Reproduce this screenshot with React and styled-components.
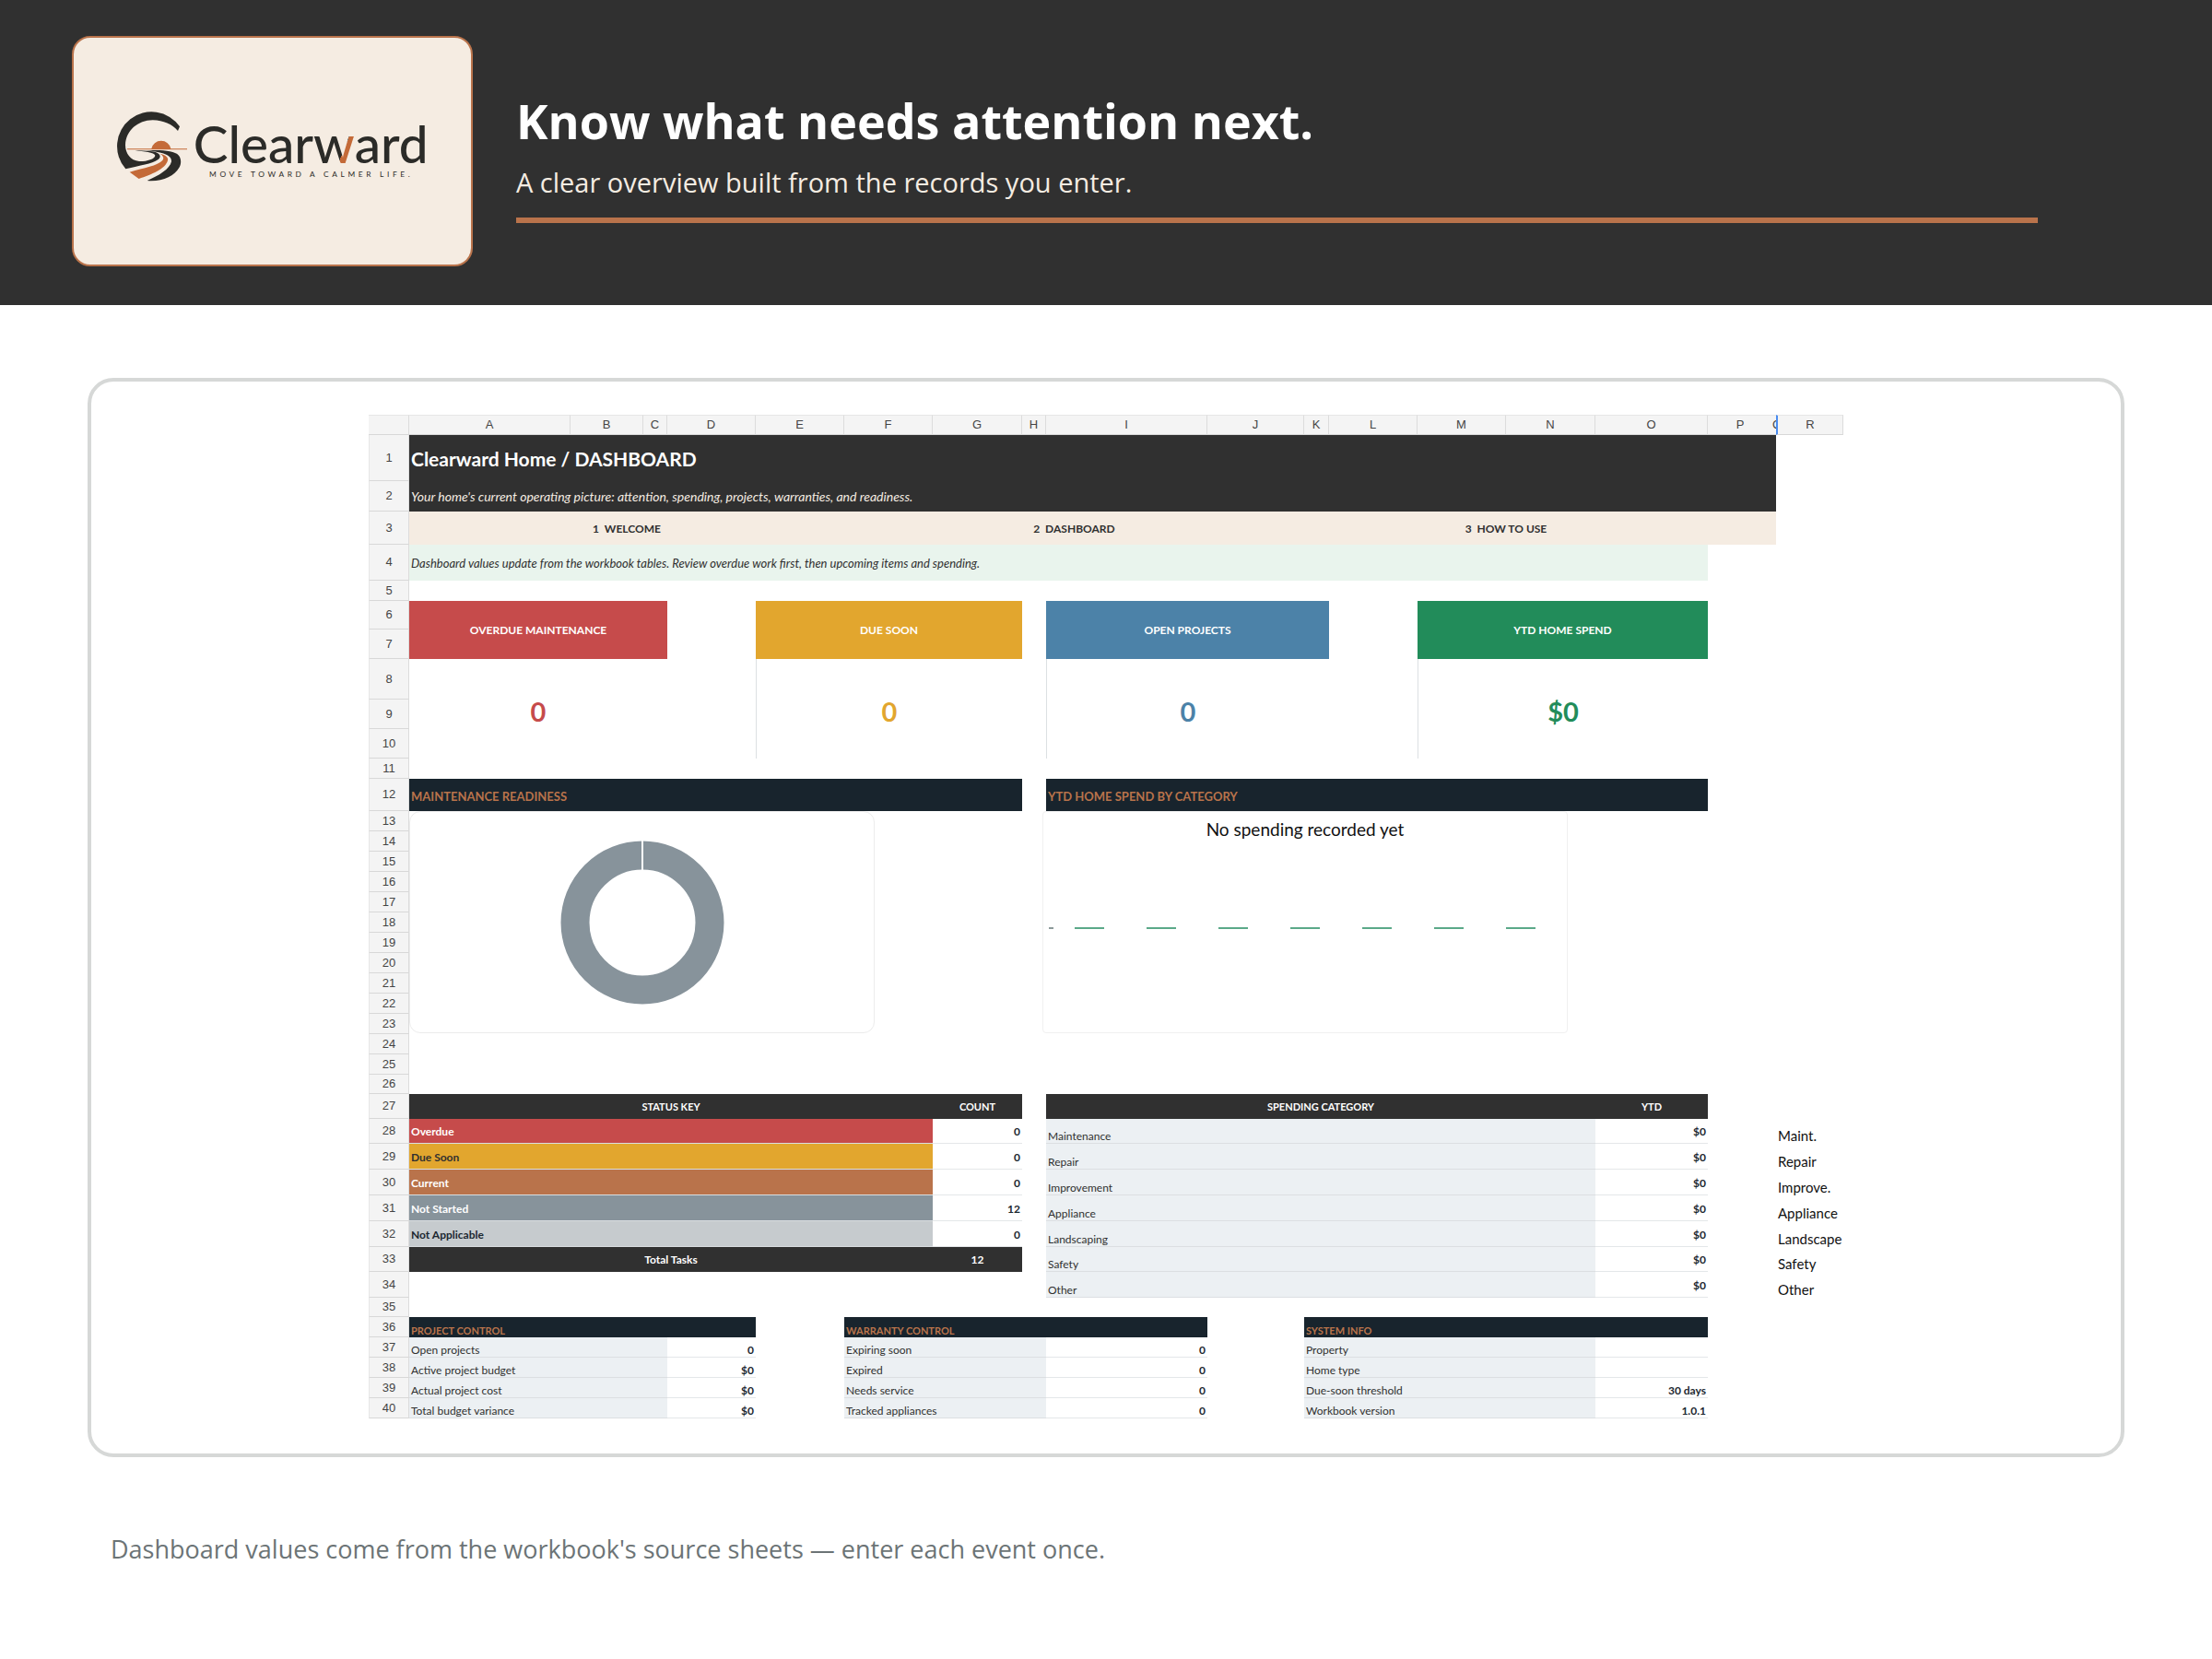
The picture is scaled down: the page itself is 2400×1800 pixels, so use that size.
import React from 'react'
import styled, { createGlobalStyle, css } from 'styled-components'

// column letter -> width, the table shares out its own width in these proportions
const columns = [
  ['A', 175], ['B', 79], ['C', 26], ['D', 96], ['E', 96], ['F', 96], ['G', 97], ['H', 26],
  ['I', 175], ['J', 105], ['K', 27], ['L', 96], ['M', 96], ['N', 97], ['O', 122], ['P', 70],
  ['Q', 4], ['R', 73],
]

const statuses = [
  { name: 'Overdue', count: 0, bg: '#c64b4b', color: '#fff', height: 27 },
  { name: 'Due Soon', count: 0, bg: '#e2a62e', color: '#303030', height: 28 },
  { name: 'Current', count: 0, bg: '#b9734b', color: '#fff', height: 28 },
  { name: 'Not Started', count: 12, bg: '#87939b', color: '#fff', height: 28 },
  { name: 'Not Applicable', count: 0, bg: '#c6cbce', color: '#1b2730', height: 28 },
]

const categories = [
  ['Maintenance', 'Maint.'],
  ['Repair', 'Repair'],
  ['Improvement', 'Improve.'],
  ['Appliance', 'Appliance'],
  ['Landscaping', 'Landscape'],
  ['Safety', 'Safety'],
  ['Other', 'Other'],
]

const controls = [
  [['Open projects', '0'], ['Expiring soon', '0'], ['Property', '']],
  [['Active project budget', '$0'], ['Expired', '0'], ['Home type', '']],
  [['Actual project cost', '$0'], ['Needs service', '0'], ['Due-soon threshold', '30 days']],
  [['Total budget variance', '$0'], ['Tracked appliances', '0'], ['Workbook version', '1.0.1']],
]

const Row = ({ n, h, children }) => (
  <Tr $h={h}>
    <RowHead scope="row">{n}</RowHead>
    {children}
  </Tr>
)

const Spending = ({ i }) => (
  <>
    <LabelCell colSpan={6}>{categories[i][0]}</LabelCell>
    <ValueCell>$0</ValueCell>
    <Cell colSpan={2} />
    <HelperCell>{categories[i][1]}</HelperCell>
  </>
)

const Logo = () => (
  <svg width="340" height="88" viewBox="201 300 1020 264" role="img" aria-label="Clearward">
    <defs>
      {/* splits the w so that only its last stroke is orange */}
      <linearGradient id="stroke" gradientUnits="userSpaceOnUse" x1="925" y1="421" x2="959" y2="435">
        <stop offset="0.5" stopColor="#2b2b28" />
        <stop offset="0.5" stopColor="#c46a38" />
      </linearGradient>
    </defs>
    <path fill="#2b2b28" d="M408 352A112 112 0 1 0 232 490C280 478 316 474 338 459C352 448 340 436 318 433C300 431 280 430 262 430C290 433 326 436 328 446C328 458 298 466 276 465C248 463 231 440 231 412C233 364 272 332 320 331C356 332 382 344 402 366Z" />
    <path fill="#c46a38" d="M343 440C362 444 372 452 369 462C362 490 316 508 275 522L245 500C292 486 336 480 352 462C358 454 354 446 343 440Z" />
    <path fill="#2b2b28" d="M300 430C350 428 390 430 405 446C414 458 413 474 406 486C390 514 350 532 302 528C340 512 376 490 381 466C384 444 346 434 300 430Z" />
    <path fill="#c46a38" d="M316 424a32 31 0 0 1 63 0H432V427H237V424Z" />
    <LogoType x="452" y="472">
      Clear<tspan fill="url(#stroke)">w</tspan>ard
    </LogoType>
    <LogoTag x="504" y="516">MOVE TOWARD A CALMER LIFE.</LogoTag>
  </svg>
)

const Donut = () => (
  <svg width="178" height="178" viewBox="0 0 178 178" role="img" aria-label="Maintenance readiness">
    <circle cx="89" cy="89" r="73" fill="none" stroke="#87939b" strokeWidth="31" />
    <path d="M89 0V32" stroke="#fff" strokeWidth="2" />
  </svg>
)

const SpendBars = () => (
  <svg width="100%" height="120" viewBox="0 0 568 120" role="img" aria-label="Spend by category">
    <path d="M6 43H11" stroke="#8c9a9a" strokeWidth="2" />
    {categories.map(([name], i) => (
      <path key={name} d={`M${34 + i * 78} 43h32`} stroke="#5ba989" strokeWidth="2" />
    ))}
  </svg>
)

const App = () => (
  <>
    <GlobalStyle />
    <Header>
      <LogoCard>
        <Logo />
      </LogoCard>
      <Intro>
        <Headline>Know what needs attention next.</Headline>
        <Lead>A clear overview built from the records you enter.</Lead>
      </Intro>
    </Header>
    <Main>
      <Panel>
        <Sheet>
          <colgroup>
            <Col $w={44} />
            {columns.map(([letter, w]) => <Col key={letter} $w={w} />)}
          </colgroup>
          <thead>
            <Tr $h={22}>
              <ColHead aria-label="Corner" />
              {columns.map(([letter]) => (
                <ColHead key={letter} scope="col" $letter={letter}>
                  {letter === 'Q' ? <Clip>Q</Clip> : letter}
                </ColHead>
              ))}
            </Tr>
          </thead>
          <tbody>
            <Row n={1} h={50}>
              <TitleCell colSpan={17}>Clearward Home / DASHBOARD</TitleCell>
            </Row>
            <Row n={2} h={33}>
              <TaglineCell colSpan={17}>Your home's current operating picture: attention, spending, projects, warranties, and readiness.</TaglineCell>
            </Row>
            <Row n={3} h={36}>
              <NavCell colSpan={5}><NavLink href="#welcome">1&nbsp; WELCOME</NavLink></NavCell>
              <NavCell colSpan={5}><NavLink href="#dashboard">2&nbsp; DASHBOARD</NavLink></NavCell>
              <NavCell colSpan={5}><NavLink href="#how-to-use">3&nbsp; HOW TO USE</NavLink></NavCell>
              <NavCell colSpan={2} />
            </Row>
            <Row n={4} h={39}>
              <NoteCell colSpan={15}>Dashboard values update from the workbook tables. Review overdue work first, then upcoming items and spending.</NoteCell>
            </Row>
            <Row n={5} h={22} />
            <Row n={6} h={31}>
              <KpiHead colSpan={3} rowSpan={2} $bg="#c64b4b">OVERDUE MAINTENANCE</KpiHead>
              <Cell rowSpan={2} />
              <KpiHead colSpan={3} rowSpan={2} $bg="#e2a62e">DUE SOON</KpiHead>
              <Cell rowSpan={2} />
              <KpiHead colSpan={3} rowSpan={2} $bg="#4c82a8">OPEN PROJECTS</KpiHead>
              <Cell rowSpan={2} />
              <KpiHead colSpan={3} rowSpan={2} $bg="#228c5a">YTD HOME SPEND</KpiHead>
            </Row>
            <Row n={7} h={32} />
            <Row n={8} h={44}>
              <KpiValue colSpan={3} rowSpan={3} $color="#c64b4b">0</KpiValue>
              <Cell rowSpan={3} />
              <KpiValue colSpan={3} rowSpan={3} $color="#e2a62e" $line>0</KpiValue>
              <Cell rowSpan={3} />
              <KpiValue colSpan={3} rowSpan={3} $color="#4c82a8" $line>0</KpiValue>
              <Cell rowSpan={3} />
              <KpiValue colSpan={3} rowSpan={3} $color="#228c5a" $line>$0</KpiValue>
            </Row>
            <Row n={9} h={32} />
            <Row n={10} h={32} />
            <Row n={11} h={22} />
            <Row n={12} h={35}>
              <SectionHead colSpan={7}>MAINTENANCE READINESS</SectionHead>
              <Cell />
              <SectionHead colSpan={7}>YTD HOME SPEND BY CATEGORY</SectionHead>
            </Row>
            <Row n={13} h={22}>
              <ChartCell colSpan={7} rowSpan={11}>
                <DonutCard><Donut /></DonutCard>
              </ChartCell>
              <ChartCell colSpan={8} rowSpan={11} $inset>
                <BarCard>
                  <ChartTitle>No spending recorded yet</ChartTitle>
                  <SpendBars />
                </BarCard>
              </ChartCell>
            </Row>
            {[14, 15, 16, 17, 18, 19, 20, 21, 22, 23, 24, 25].map(n => <Row key={n} n={n} h={22} />)}
            <Row n={26} h={21} />
            <Row n={27} h={27}>
              <TableHead colSpan={6}>STATUS KEY</TableHead>
              <TableHead>COUNT</TableHead>
              <Cell />
              <TableHead colSpan={6}>SPENDING CATEGORY</TableHead>
              <TableHead>YTD</TableHead>
            </Row>
            {statuses.map((s, i) => (
              <Row key={s.name} n={28 + i} h={s.height}>
                <StatusCell colSpan={6} $bg={s.bg} $color={s.color}>{s.name}</StatusCell>
                <ValueCell>{s.count}</ValueCell>
                <Cell />
                <Spending i={i} />
              </Row>
            ))}
            <Row n={33} h={27}>
              <TotalCell colSpan={6}>Total Tasks</TotalCell>
              <TotalCell>12</TotalCell>
              <Cell />
              <Spending i={5} />
            </Row>
            <Row n={34} h={28}>
              <Cell colSpan={8} />
              <Spending i={6} />
            </Row>
            <Row n={35} h={21} />
            <Row n={36} h={22}>
              <SectionHead colSpan={4} $low>PROJECT CONTROL</SectionHead>
              <Cell />
              <SectionHead colSpan={4} $low>WARRANTY CONTROL</SectionHead>
              <Cell />
              <SectionHead colSpan={5} $low>SYSTEM INFO</SectionHead>
            </Row>
            {controls.map(([project, warranty, system], i) => (
              <Row key={project[0]} n={37 + i} h={22}>
                <LabelCell colSpan={3}>{project[0]}</LabelCell>
                <ValueCell $low>{project[1]}</ValueCell>
                <Cell />
                <LabelCell colSpan={3}>{warranty[0]}</LabelCell>
                <ValueCell $low>{warranty[1]}</ValueCell>
                <Cell />
                <LabelCell colSpan={4}>{system[0]}</LabelCell>
                <ValueCell $low>{system[1]}</ValueCell>
              </Row>
            ))}
          </tbody>
        </Sheet>
      </Panel>
      <Footnote>Dashboard values come from the workbook's source sheets — enter each event once.</Footnote>
    </Main>
  </>
)

const GlobalStyle = createGlobalStyle`
  * {
    box-sizing: border-box;
  }
  body {
    margin: 0;
    background: #fff;
    font-family: 'Open Sans', 'Noto Sans', sans-serif;
  }
`
const Header = styled.header`
  display: flex;
  align-items: flex-start;
  gap: 47px;
  height: 331px;
  padding: 39px 189px 0 78px;
  background: #303030;
`
const LogoCard = styled.div`
  display: flex;
  align-items: center;
  justify-content: center;
  width: 435px;
  height: 250px;
  flex: none;
  border: 2px solid #b9734b;
  border-radius: 20px;
  background: #f5ece2;
`
const LogoType = styled.text`
  fill: #2b2b28;
  font-family: Lato, sans-serif;
  font-size: 170px;
  font-weight: 500;
`
const LogoTag = styled.text`
  fill: #2b2b28;
  font-family: Lato, sans-serif;
  font-size: 25px;
  letter-spacing: 11px;
`
const Intro = styled.div`
  flex: 1;
  padding-top: 56px;
  border-bottom: 6px solid #b9734b;
`
const Headline = styled.h1`
  margin: 0;
  font-size: 52px;
  line-height: 72px;
  font-weight: 700;
  color: #fff;
`
const Lead = styled.p`
  margin: 0;
  padding: 11px 0 18px;
  font-size: 29px;
  line-height: 40px;
  color: #f5ece2;
`
const Main = styled.main`
  padding: 79px 95px;
`
const Panel = styled.section`
  padding: 36px 36px 38px;
  border: 4px solid #d6d8d7;
  border-radius: 28px;
`
const Sheet = styled.table`
  width: 100%;
  max-width: 1600px;
  margin: 0 auto;
  table-layout: fixed;
  border-collapse: separate;
  border-spacing: 0;
  font-family: Lato, sans-serif;
  font-size: 12px;
  line-height: 14px;
  color: #303030;
`
const Col = styled.col`
  width: ${p => p.$w}px;
`
const Tr = styled.tr`
  height: ${p => p.$h}px;
`
const heading = css`
  padding: 0;
  border-right: 1px solid #dcdcdc;
  border-bottom: 1px solid #d8d8d8;
  background: #f4f4f4;
  font-family: 'Liberation Sans', Arial, sans-serif;
  font-size: 13px;
  font-weight: 400;
  color: #444;
  text-align: center;
`
const ColHead = styled.th`
  ${heading}
  border-top: 1px solid #e6e6e6;
  ${p => (p.$letter === 'P' || p.$letter === 'Q') && 'border-right: 0;'}
  ${p => p.$letter === 'R' && 'border-left: 2px solid #4a8cf0;'}
`
const Clip = styled.span`
  display: block;
  overflow: hidden;
  text-align: left;
`
const RowHead = styled.th`
  ${heading}
  border-left: 1px solid #e6e6e6;
`
const Cell = styled.td`
  padding: 0 2px;
`
const TitleCell = styled(Cell)`
  padding-top: 2px;
  background: #303030;
  color: #fff;
  font-size: 21px;
  line-height: 24px;
  font-weight: 700;
`
const TaglineCell = styled(Cell)`
  background: #303030;
  color: #f5ece2;
  font-size: 14px;
  font-style: italic;
`
const NavCell = styled(Cell)`
  padding-top: 2px;
  background: #f5ece2;
  font-weight: 700;
  text-align: center;
`
const NavLink = styled.a`
  color: #303030;
  text-decoration: none;
`
const NoteCell = styled(Cell)`
  background: #e9f4ed;
  font-size: 13px;
  font-style: italic;
`
const KpiHead = styled(Cell)`
  background: ${p => p.$bg};
  color: #fff;
  font-weight: 700;
  text-align: center;
`
const KpiValue = styled(Cell)`
  padding-top: 6px;
  border-left: ${p => p.$line ? '1px solid #dce0e3' : '0'};
  color: ${p => p.$color};
  font-size: 29px;
  line-height: 32px;
  font-weight: 700;
  text-align: center;
`
const SectionHead = styled(Cell)`
  padding-top: 2px;
  background: #18242d;
  color: #b9734b;
  font-weight: 700;
  font-size: ${p => p.$low ? 11 : 13}px;
  vertical-align: ${p => p.$low ? 'bottom' : 'middle'};
`
const ChartCell = styled.td`
  padding: 0 0 0 ${p => p.$inset ? 22 : 0}px;
  vertical-align: top;
`
const DonutCard = styled.div`
  display: flex;
  align-items: center;
  justify-content: center;
  width: 76%;
  height: 241px;
  border: 1px solid #ececec;
  border-radius: 12px;
`
const BarCard = styled.div`
  width: 570px;
  max-width: 100%;
  height: 241px;
  border: 1px solid #f0f0f0;
  border-radius: 4px;
`
const ChartTitle = styled.p`
  margin: 0;
  padding: 8px 0 53px;
  font-size: 19px;
  line-height: 22px;
  color: #111;
  text-align: center;
`
const TableHead = styled(Cell)`
  background: #303030;
  color: #fff;
  font-size: 11px;
  font-weight: 700;
  text-align: center;
`
const TotalCell = styled(TableHead)`
  font-size: 12px;
`
const StatusCell = styled(Cell)`
  padding-top: 2px;
  border-bottom: 1px solid #d9dde0;
  background: ${p => p.$bg};
  color: ${p => p.$color};
  font-weight: 700;
`
const LabelCell = styled(Cell)`
  border-bottom: 1px solid #dcdfe2;
  background: #ecf0f3;
  vertical-align: bottom;
`
const ValueCell = styled(Cell)`
  padding-top: 2px;
  border-bottom: 1px solid #e4e7e9;
  color: #1b2730;
  font-weight: 700;
  text-align: right;
  vertical-align: ${p => p.$low ? 'bottom' : 'middle'};
`
const HelperCell = styled(Cell)`
  font-size: 15px;
  line-height: 18px;
  color: #111;
  white-space: nowrap;
  vertical-align: bottom;
`
const Footnote = styled.p`
  margin: 0;
  padding: 80px 25px 0;
  font-size: 27px;
  line-height: 40px;
  color: #6c7476;
`

export default App
